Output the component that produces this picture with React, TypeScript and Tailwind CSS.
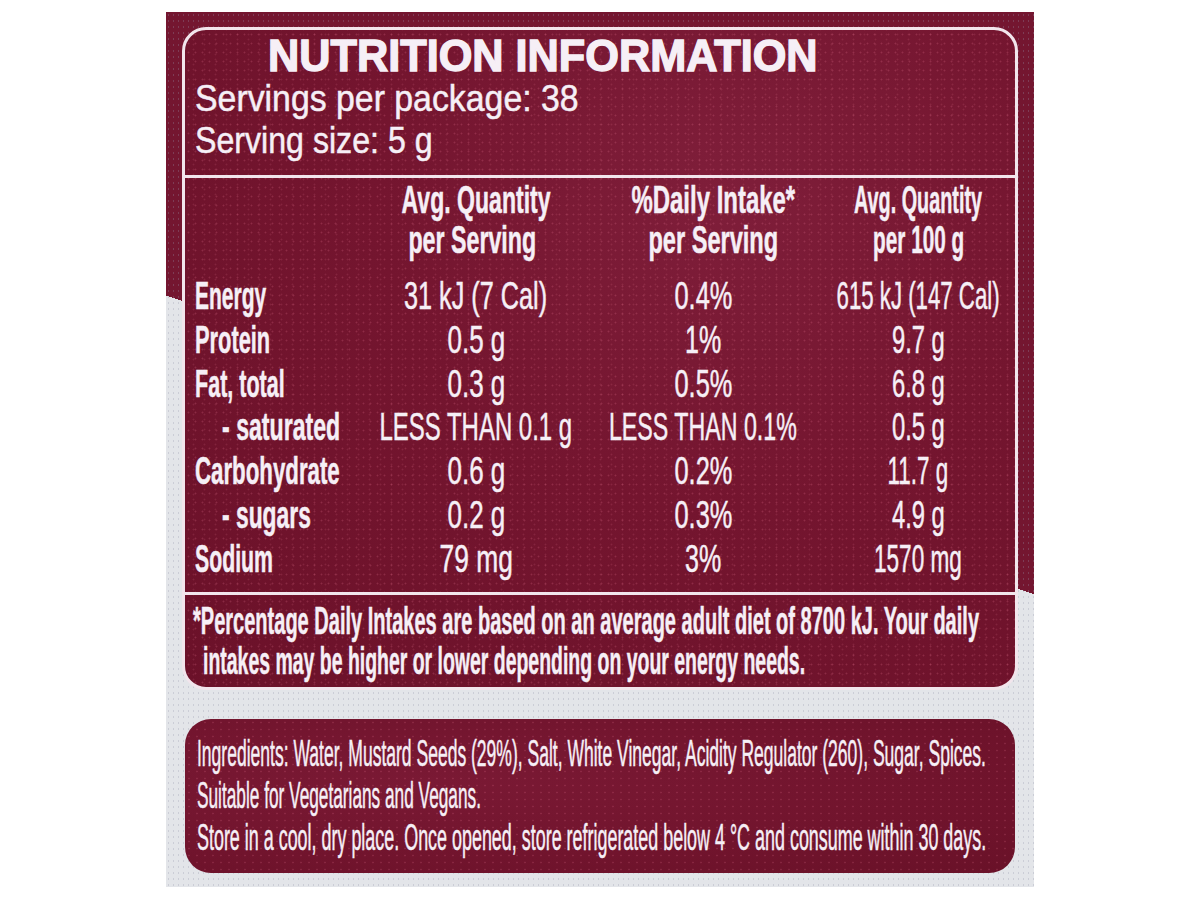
import { useLayoutEffect, useRef, useState, type ReactNode } from "react";

// squeezes a line of text horizontally to the width it has on the printed label
function Fit({ w, left, children }: { w: number; left?: boolean; children: ReactNode }) {
  const ref = useRef<HTMLSpanElement>(null);
  const [natural, setNatural] = useState(0);

  useLayoutEffect(() => {
    if (ref.current) setNatural(ref.current.offsetWidth);
  }, [w]);

  const scale = natural ? w / natural : 1;
  const slack = natural ? w - natural : 0;

  return (
    <span
      ref={ref}
      className={`inline-block shrink-0 whitespace-nowrap ${left ? "origin-left" : "origin-center"}`}
      style={{
        transform: `scaleX(${scale})`,
        marginRight: left ? slack : slack / 2,
        marginLeft: left ? 0 : slack / 2,
      }}
    >
      {children}
    </span>
  );
}

const rows = [
  { label: "Energy", lw: 71, a: "31 kJ (7 Cal)", aw: 143, d: "0.4%", dw: 58, p: "615 kJ (147 Cal)", pw: 163 },
  { label: "Protein", lw: 75, a: "0.5 g", aw: 58, d: "1%", dw: 36, p: "9.7 g", pw: 53 },
  { label: "Fat, total", lw: 90, a: "0.3 g", aw: 58, d: "0.5%", dw: 58, p: "6.8 g", pw: 53 },
  { label: "- saturated", lw: 118, indent: true, a: "LESS THAN 0.1 g", aw: 193, d: "LESS THAN 0.1%", dw: 188, p: "0.5 g", pw: 53 },
  { label: "Carbohydrate", lw: 145, a: "0.6 g", aw: 58, d: "0.2%", dw: 58, p: "11.7 g", pw: 61 },
  { label: "- sugars", lw: 89, indent: true, a: "0.2 g", aw: 58, d: "0.3%", dw: 58, p: "4.9 g", pw: 53 },
  { label: "Sodium", lw: 78, a: "79 mg", aw: 73, d: "3%", dw: 36, p: "1570 mg", pw: 88 },
];

export default function App() {
  return (
    <div className="min-h-[900px] bg-white pt-[12px] pl-[166px] font-['Liberation_Sans',Arial,sans-serif] text-[#f6eff6] [-webkit-text-stroke:0.5px_#f6eff6]">
      <div className="w-[868px] h-[875px] px-[16px] pt-[15px] bg-[radial-gradient(circle,rgba(150,150,170,0.3)_0.6px,transparent_1.1px),linear-gradient(199deg,#741630_49.6%,#e3e5e9_49.6%)] bg-[length:5px_6px,100%_100%]">
        {/* nutrition panel */}
        <div className="h-[663px] rounded-[24px] border-[3px] border-[#f2e5ec] bg-[radial-gradient(circle,rgba(255,135,165,0.2)_0.7px,transparent_1.2px),radial-gradient(circle,rgba(255,135,165,0.13)_0.7px,transparent_1.2px),radial-gradient(ellipse_at_65%_25%,#7f1e3a_0%,#74152f_45%,#6b1129_100%)] bg-[length:7px_9px,11px_5px,100%_100%] bg-[position:0_0,3px_2px,0_0] flex flex-col overflow-hidden">
          <div className="h-[148px] border-b-[3px] border-[#f2e5ec] pt-[8px]">
            <div className="ml-[83px] text-[45px] leading-[36px] font-bold [-webkit-text-stroke:1.4px_#f6eff6]">
              <Fit w={550} left>NUTRITION INFORMATION</Fit>
            </div>
            <div className="pl-[10px] pt-[4px] text-[37px] leading-[42px]">
              <div>
                <Fit w={384} left>Servings per package: 38</Fit>
              </div>
              <div>
                <Fit w={238} left>Serving size: 5 g</Fit>
              </div>
            </div>
          </div>

          <div className="h-[417px] border-b-[3px] border-[#f2e5ec] pl-[10px] pt-[2px]">
            <div className="grid grid-cols-[185px_192px_262px_168px] text-[39px] leading-[40px] font-bold">
              <div />
              <div className="flex flex-col items-center">
                <Fit w={149}>Avg. Quantity</Fit>
                <div className="-ml-[8px]">
                  <Fit w={128}>per Serving</Fit>
                </div>
              </div>
              <div className="flex flex-col items-center pl-[20px]">
                <Fit w={164}>%Daily Intake*</Fit>
                <Fit w={130}>per Serving</Fit>
              </div>
              <div className="flex flex-col items-center">
                <Fit w={128}>Avg. Quantity</Fit>
                <div className="pl-[2px]">
                  <Fit w={91}>per 100 g</Fit>
                </div>
              </div>
            </div>

            <div className="mt-[14px] grid grid-cols-[185px_192px_262px_168px] text-[39px] leading-[43.8px]">
              {rows.map((r) => (
                <div key={r.label} className="contents">
                  <div className={`font-bold ${r.indent ? "pl-[27px]" : ""}`}>
                    <Fit w={r.lw} left>{r.label}</Fit>
                  </div>
                  <div className="flex justify-center">
                    <Fit w={r.aw}>{r.a}</Fit>
                  </div>
                  <div className="flex justify-center">
                    <Fit w={r.dw}>{r.d}</Fit>
                  </div>
                  <div className="flex justify-center">
                    <Fit w={r.pw}>{r.p}</Fit>
                  </div>
                </div>
              ))}
            </div>
          </div>

          <div className="flex-1 pl-[8px] pt-[6px] text-[39px] leading-[40px] font-bold">
            <div>
              <Fit w={786} left>*Percentage Daily Intakes are based on an average adult diet of 8700 kJ. Your daily</Fit>
            </div>
            <div className="pl-[10px]">
              <Fit w={602} left>intakes may be higher or lower depending on your energy needs.</Fit>
            </div>
          </div>
        </div>

        {/* ingredients panel */}
        <div className="mx-[3px] mt-[29px] h-[154px] overflow-hidden rounded-[26px] bg-[radial-gradient(circle,rgba(255,135,165,0.16)_0.7px,transparent_1.2px),radial-gradient(ellipse_at_30%_40%,#7a1934_0%,#71142d_60%,#691128_100%)] bg-[length:8px_7px,100%_100%] pl-[12px] pt-[14px] text-[37px] leading-[42px]">
          <div>
            <Fit w={789} left>Ingredients: Water, Mustard Seeds (29%), Salt, White Vinegar, Acidity Regulator (260), Sugar, Spices.</Fit>
          </div>
          <div>
            <Fit w={284} left>Suitable for Vegetarians and Vegans.</Fit>
          </div>
          <div>
            <Fit w={789} left>Store in a cool, dry place. Once opened, store refrigerated below 4 °C and consume within 30 days.</Fit>
          </div>
        </div>
      </div>
    </div>
  );
}
